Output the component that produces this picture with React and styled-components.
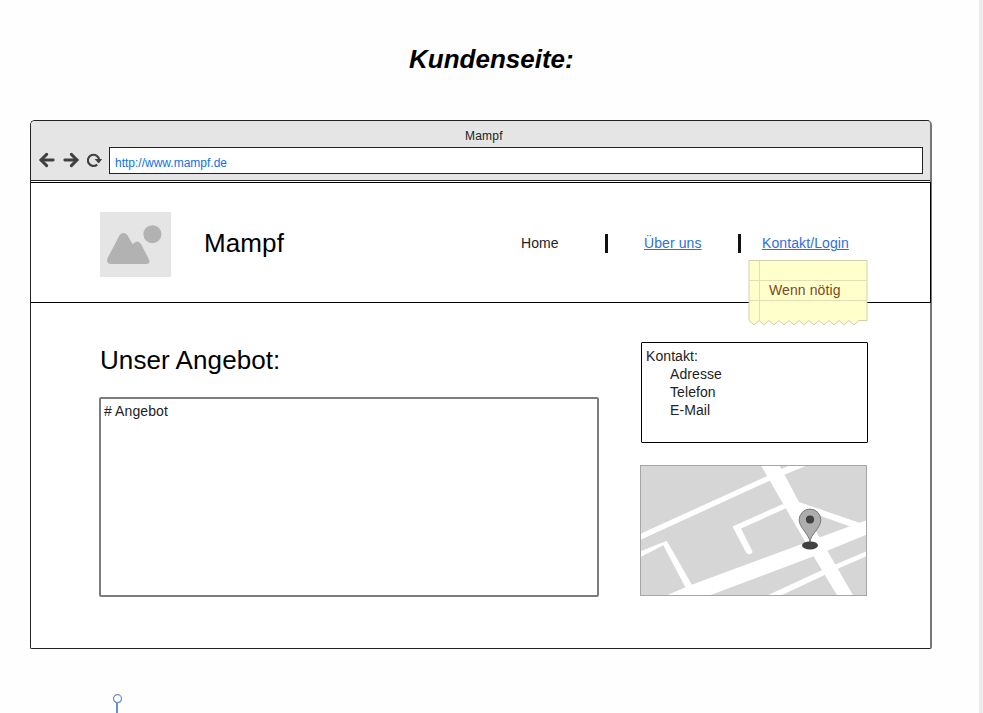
import React from "react";
import styled, { createGlobalStyle } from "styled-components";

const GlobalStyle = createGlobalStyle`
  *, *::before, *::after { box-sizing: border-box; }
  body { margin: 0; background: #fff; font-family: "Liberation Sans", Arial, sans-serif; }
  svg { display: block; flex: none; }
`;

const Page = styled.div`
  width: 983px;
  height: 713px;
  overflow: hidden;
  background: #fefefe;
  border-right: 4px solid #ececec;
`;

const PageTitle = styled.h1`
  margin: 0;
  padding: 44px 0 0 409px;
  height: 120px;
  font-size: 26px;
  line-height: 30px;
  font-style: italic;
  font-weight: bold;
  color: #000;
`;

const BrowserWindow = styled.section`
  width: 902px;
  height: 529px;
  margin-left: 30px;
  border: 1px solid #222;
  border-right: 2px solid #777;
  border-radius: 5px 5px 2px 2px;
  background: #fff;
`;

const Chrome = styled.div`
  height: 60px;
  background: #e5e5e5;
  border-bottom: 1px solid #222;
  border-radius: 4px 4px 0 0;
`;

const TabTitle = styled.div`
  height: 26px;
  padding: 8px 0 0 434px;
  font-size: 12px;
  line-height: 14px;
  letter-spacing: 0.2px;
  color: #222;
`;

const Toolbar = styled.div`
  display: flex;
  align-items: flex-start;
  gap: 8px;
  padding: 0 7px 0 8px;
`;

const ToolIcon = styled.svg`
  margin-top: 5px;
`;

const AddressBar = styled.div`
  flex: 1;
  height: 27px;
  margin-left: -2px;
  padding: 2px 0 0 5px;
  border: 1px solid #222;
  background: #fff;
  font-size: 12px;
  line-height: 26px;
  color: #1071e5;
`;

const SiteHeader = styled.header`
  display: flex;
  height: 121px;
  margin-top: 1px;
  margin-right: -1px;
  border: 1px solid #000;
  border-left: 0;
  padding: 29px 0 0 69px;
`;

const Brand = styled.div`
  width: 317px;
  padding: 16px 0 0 33px;
  font-size: 26px;
  line-height: 30px;
  letter-spacing: 0.1px;
  color: #000;
`;

const Nav = styled.nav`
  display: flex;
  align-items: flex-start;
  padding: 22px 0 0 33px;
`;

const NavItem = styled.span`
  position: relative;
  width: ${(p) => p.$width}px;
  font-size: 14px;
  line-height: 18px;
  letter-spacing: 0.1px;
  color: ${(p) => (p.$link ? "#2e6fdb" : "#222")};
  text-decoration: ${(p) => (p.$link ? "underline" : "none")};
  text-underline-offset: 1px;
  text-decoration-thickness: 1px;
  white-space: nowrap;
`;

const Divider = styled.span`
  width: 3px;
  height: 19px;
  margin-right: ${(p) => p.$after}px;
  background: #111;
`;

const StickyNote = styled.div`
  position: absolute;
  left: -14px;
  top: 26px;
  display: inline-grid;
`;

const NoteText = styled.span`
  grid-area: 1 / 1;
  padding: 21px 0 0 21px;
  color: #7a4a1c;
  z-index: 1;
`;

const NotePaper = styled.svg`
  grid-area: 1 / 1;
`;

const Content = styled.main`
  display: grid;
  grid-template-columns: 499px 228px;
  column-gap: 43px;
  padding: 39px 0 0 68px;
`;

const Offers = styled.section`
  display: flex;
  flex-direction: column;
`;

const SectionTitle = styled.h2`
  margin: 0;
  height: 55px;
  padding: 3px 0 0 1px;
  font-size: 26px;
  font-weight: normal;
  line-height: 30px;
  letter-spacing: 0.08px;
  color: #000;
`;

const OfferBox = styled.div`
  width: 500px;
  height: 200px;
  padding: 3px;
  border: 2px solid #7c7c7c;
  border-radius: 2px;
  font-size: 14px;
  line-height: 18px;
  letter-spacing: 0.1px;
  color: #222;
`;

const Sidebar = styled.aside`
  display: flex;
  flex-direction: column;
  gap: 22px;
`;

const ContactBox = styled.div`
  width: 227px;
  height: 101px;
  padding: 4px;
  border: 1px solid #000;
  border-radius: 1px;
  font-size: 14px;
  line-height: 18px;
  letter-spacing: 0.08px;
  color: #222;
`;

const ContactLine = styled.div`
  padding-left: ${(p) => (p.$indent ? 24 : 0)}px;
`;

const MapImage = styled.svg`
  margin-left: -1px;
`;

const Connector = styled.svg`
  margin: 44px 0 0 112px;
`;

function ArrowIcon({ flip }) {
  return (
    <ToolIcon width="16" height="16" viewBox="0 0 16 16" fill="none" stroke="#404040" strokeLinecap="round">
      <g transform={flip ? "translate(16 0) scale(-1 1)" : undefined}>
        <path d="M2 8H14.2" strokeWidth="2.8" />
        <path d="M7.6 2.4 2 8l5.6 5.6" strokeWidth="3" />
      </g>
    </ToolIcon>
  );
}

function ReloadIcon() {
  return (
    <ToolIcon width="16" height="16" viewBox="0 0 16 16">
      <path d="M10.2 12.6A5.6 5.6 0 1 1 12.1 7.6" fill="none" stroke="#404040" strokeWidth="2.1" />
      <path d="M7.6 7h7.6L11.7 11.5z" fill="#404040" />
    </ToolIcon>
  );
}

function PlaceholderLogo() {
  return (
    <svg width="71" height="65" viewBox="0 0 71 65">
      <rect width="71" height="65" fill="#e5e5e5" />
      <circle cx="52.4" cy="22.2" r="9" fill="#b2b2b2" />
      <path
        d="M19.5 23.3Q23.3 18.7 27.3 23L32.7 32.2Q37.5 26.8 41 32L49 47.5Q50.5 52 46.5 52H11Q6 51.5 7.4 46.5Z"
        fill="#b2b2b2"
      />
    </svg>
  );
}

function NoteShape() {
  const teeth = Array.from({ length: 11 }, (_, i) => {
    const x = 110.5 - i * 10;
    return `L${x - 5} 64.8L${x - 10} 60.5`;
  }).join("");
  return (
    <NotePaper width="120" height="66" viewBox="0 0 120 66">
      <g transform="translate(.5 0)">
        <path d={`M.5.5H118.5V60.5H110.5${teeth}Z`} fill="#ffffcc" stroke="#cfcfae" />
        <path d="M1 20.5H118M1 40.5H118M11 1V60" stroke="#e2e0b2" fill="none" />
      </g>
    </NotePaper>
  );
}

function StreetMap() {
  return (
    <MapImage width="227" height="131" viewBox="0 0 227 131">
      <rect width="227" height="131" fill="#d6d6d6" />
      <g fill="#fff">
        <path d="M120.7 0H139.3L159.5 38 180 73 213.5 131H197.5L174 92z" />
        <path d="M227 55 212 60.5 51 120 25 131H68L173 91.5 227 69.5z" />
        <path d="M0 69 128 10.8 150 0H168L145 9.5 129 16 0 75z" />
        <path d="M92.5 61.5 143 39 146 43.3 101 63.5 112.4 86.2Q112.5 89.5 108 89.2L106 87.5z" />
        <path d="M0 86.5 26.7 75.7 52.3 120.5 46.3 124 23.3 80.3 0 92.3z" />
        <path d="M159 37 220 58 210 61.5 181 51 160 43z" />
        <path d="M227 86 196.7 99 181.7 105.3 126 131H140L186.7 109 200 102.7 227 91z" />
      </g>
      <path
        d="M170 77C169.5 69.5 159.2 63 159.2 54.9A10.8 10.8 0 0 1 180.8 54.9C180.8 63 170.5 69.5 170 77Z"
        fill="#aeaeae"
        stroke="#777"
        strokeWidth="1"
      />
      <circle cx="170" cy="54.5" r="4.1" fill="#404040" />
      <ellipse cx="170" cy="80.4" rx="8" ry="4" fill="#404040" />
      <rect x=".5" y=".5" width="226" height="130" fill="none" stroke="#a6a6a6" />
    </MapImage>
  );
}

export default function App() {
  return (
    <>
      <GlobalStyle />
      <Page>
        <PageTitle>Kundenseite:</PageTitle>
        <BrowserWindow>
          <Chrome>
            <TabTitle>Mampf</TabTitle>
            <Toolbar>
              <ArrowIcon />
              <ArrowIcon flip />
              <ReloadIcon />
              <AddressBar>http://www.mampf.de</AddressBar>
            </Toolbar>
          </Chrome>
          <SiteHeader>
            <PlaceholderLogo />
            <Brand>Mampf</Brand>
            <Nav>
              <NavItem $width={84}>Home</NavItem>
              <Divider $after={36} />
              <NavItem $link $width={94}>Über uns</NavItem>
              <Divider $after={21} />
              <NavItem as="div" $width={90}>
                <NavItem $link>Kontakt/Login</NavItem>
                <StickyNote>
                  <NoteShape />
                  <NoteText>Wenn nötig</NoteText>
                </StickyNote>
              </NavItem>
            </Nav>
          </SiteHeader>
          <Content>
            <Offers>
              <SectionTitle>Unser Angebot:</SectionTitle>
              <OfferBox># Angebot</OfferBox>
            </Offers>
            <Sidebar>
              <ContactBox>
                <ContactLine>Kontakt:</ContactLine>
                <ContactLine $indent>Adresse</ContactLine>
                <ContactLine $indent>Telefon</ContactLine>
                <ContactLine $indent>E-Mail</ContactLine>
              </ContactBox>
              <StreetMap />
            </Sidebar>
          </Content>
        </BrowserWindow>
        <Connector width="12" height="20" viewBox="0 0 12 20" fill="none" stroke="#6b8cc9">
          <circle cx="5.5" cy="5.7" r="4" strokeWidth="1.2" />
          <path d="M5 9.7V20" strokeWidth="2" />
        </Connector>
      </Page>
    </>
  );
}
